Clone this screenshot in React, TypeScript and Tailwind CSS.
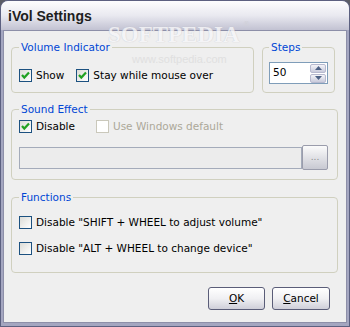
import React from "react";

const font = { fontFamily: '"DejaVu Sans", sans-serif' };

function Check({ checked, disabled }: { checked?: boolean; disabled?: boolean }) {
  return (
    <div
      className={
        "w-[13px] h-[13px] shrink-0 border flex items-center justify-center " +
        (disabled
          ? "border-[#cac8bb] bg-white"
          : "border-[#1c5180] bg-gradient-to-br from-[#dcdcd7] to-white")
      }
    >
      {checked && (
        <svg width="9" height="9" viewBox="0 0 9 9">
          <path d="M1 4 L3.3 6.6 L8 1.5" stroke="#21a121" strokeWidth="2.2" fill="none" />
        </svg>
      )}
    </div>
  );
}

function CheckRow({ label, checked, disabled }: { label: string; checked?: boolean; disabled?: boolean }) {
  return (
    <div className="flex items-center gap-[4px]">
      <Check checked={checked} disabled={disabled} />
      <span className={"text-[10.5px] leading-[13px] whitespace-nowrap " + (disabled ? "text-[#aca899]" : "text-black")}>{label}</span>
    </div>
  );
}

function Group({ title, className, children }: { title: string; className?: string; children?: React.ReactNode }) {
  return (
    <fieldset className={"border border-[#d0d0bf] rounded-[4px] " + (className ?? "")}>
      <legend className="px-[2px] text-[10.5px] leading-[13px] text-[#0046d5]">{title}</legend>
      {children}
    </fieldset>
  );
}

function XPButton({ children, className }: { children: React.ReactNode; className?: string }) {
  return (
    <div
      className={
        "h-[23px] rounded-[3px] border border-[#5a5d78] bg-gradient-to-b from-white via-[#f0f0f3] to-[#cfcfd9] flex items-center justify-center text-[10.5px] text-black " +
        (className ?? "")
      }
    >
      {children}
    </div>
  );
}

export default function App() {
  return (
    <div className="w-[350px] h-[327px] bg-[#5b5d66] relative overflow-hidden" style={font}>
      <div className="w-full h-full rounded-t-[8px] bg-[#a4a6c0] border border-[#5c6080] flex flex-col overflow-hidden">
        {/* title bar */}
        <div className="h-[29px] shrink-0 bg-gradient-to-b from-[#fdfdfe] via-[#e9e9f0] to-[#c2c2d2] flex items-center pl-[7px]">
          <span
            className="text-[14px] font-bold text-[#1e1e1e] leading-none mt-[1px]"
            style={{ fontFamily: '"Liberation Sans", sans-serif' }}
          >
            iVol Settings
          </span>
        </div>
        {/* body */}
        <div className="flex-1 mx-[2px] mb-[3px] border border-[#8d8fa8] bg-[#efefef] flex flex-col pl-[7px] pr-[8px] pt-[10px]">
          <div className="flex gap-[8px]">
            <Group title="Volume Indicator" className="w-[243px] h-[52px] pl-[7px] pt-[15px]">
              <div className="flex gap-[12px]">
                <CheckRow label="Show" checked />
                <CheckRow label="Stay while mouse over" checked />
              </div>
            </Group>
            <Group title="Steps" className="w-[73px] h-[52px] pl-[6px] pt-[8px]">
              <div className="w-[59px] h-[22px] border border-[#7f9db9] bg-white flex items-center justify-between pl-[3px] pr-[1px]">
                <span className="text-[10.5px] text-black">50</span>
                <div className="flex flex-col gap-[1px]">
                  <div className="w-[16px] h-[9px] rounded-[2px] border border-[#b7b9cf] bg-gradient-to-b from-[#f4f4f8] to-[#c9cbdc] flex items-center justify-center">
                    <svg width="7" height="4" viewBox="0 0 7 4"><path d="M0 4 L3.5 0 L7 4 Z" fill="#4d6185" /></svg>
                  </div>
                  <div className="w-[16px] h-[9px] rounded-[2px] border border-[#b7b9cf] bg-gradient-to-b from-[#f4f4f8] to-[#c9cbdc] flex items-center justify-center">
                    <svg width="7" height="4" viewBox="0 0 7 4"><path d="M0 0 L3.5 4 L7 0 Z" fill="#4d6185" /></svg>
                  </div>
                </div>
              </div>
            </Group>
          </div>

          <Group title="Sound Effect" className="mt-[10px] h-[77px] pl-[7px] pt-[4px]">
            <div className="flex gap-[21px]">
              <CheckRow label="Disable" checked />
              <CheckRow label="Use Windows default" disabled />
            </div>
            <div className="flex items-center mt-[12px]">
              <div className="w-[283px] h-[22px] border border-[#a4abba] bg-[#ececec]" />
              <div className="w-[26px] h-[25px] rounded-[2px] border border-[#9a9cab] bg-gradient-to-b from-[#fbfbfb] to-[#c8c9d2] flex items-center justify-center text-[9px] text-[#8c8c8c]">
                ...
              </div>
            </div>
          </Group>

          <Group title="Functions" className="mt-[11px] h-[82px] pl-[7px] pt-[12px]">
            <div className="flex flex-col gap-[13px]">
              <CheckRow label={'Disable "SHIFT + WHEEL to adjust volume"'} />
              <CheckRow label={'Disable "ALT + WHEEL to change device"'} />
            </div>
          </Group>

          <div className="flex justify-end gap-[7px] mt-[14px] pr-[8px]">
            <XPButton className="w-[57px]">
              <span><span className="underline">O</span>K</span>
            </XPButton>
            <XPButton className="w-[58px]">
              <span><span className="underline">C</span>ancel</span>
            </XPButton>
          </div>
        </div>
      </div>
      {/* watermark */}
      <div className="absolute left-[108px] top-[22px] text-[23px] leading-[26px] font-bold text-[#f6f6f8] opacity-80 [text-shadow:0_0_1px_#b8b8c4] pointer-events-none" style={{ fontFamily: '"Liberation Serif", serif' }}>
        SOFTPEDIA
      </div>
      <div className="absolute left-[243px] top-[20px] text-[7px] leading-[8px] text-[#d0d0d8] pointer-events-none">®</div>
      <div className="absolute left-[132px] top-[53px] text-[11px] leading-[13px] text-[#e0e0e0] pointer-events-none" style={{ fontFamily: '"Liberation Sans", sans-serif' }}>
        www.softpedia.com
      </div>
    </div>
  );
}
